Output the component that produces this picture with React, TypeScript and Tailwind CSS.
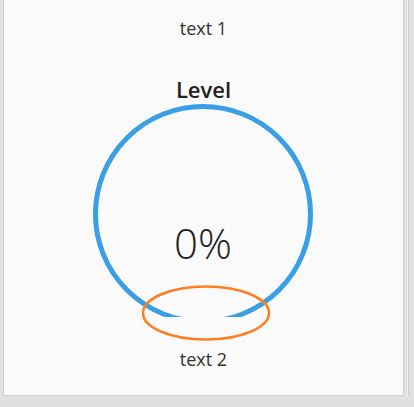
const ring = { cx: 112, cy: 112, r: 107.5 };

const App = () => (
  <div className="w-[414px] h-[407px] bg-[#e0e0e0] flex font-['Open_Sans',sans-serif] overflow-hidden">
    <div className="relative ml-[3px] w-[401px] h-[396px] bg-[#fafafa] border-x border-b border-[#d0d0d0] flex flex-col items-center">
      <div className="mt-[15px] text-[18px] leading-[26px] text-[#333]">text 1</div>
      <div className="mt-[33px] text-[22px] leading-[30px] font-semibold text-[#222]">Level</div>
      <div className="relative mt-[-2px] w-[224px] h-[216px] mr-[1px]">
        <svg width="224" height="216" viewBox="0 0 224 216">
          <defs>
            <clipPath id="ringClip">
              <rect x="0" y="0" width="224" height="215" />
            </clipPath>
          </defs>
          <circle cx={ring.cx} cy={ring.cy} r={ring.r} fill="none" stroke="#3b9fe6" strokeWidth="5" clipPath="url(#ringClip)" />
        </svg>
        <div className="absolute inset-x-0 top-[116px] text-center text-[42px] leading-[50px] font-light text-[#222]">0%</div>
      </div>
      <div className="mt-[28px] text-[18px] leading-[26px] text-[#333]">text 2</div>
      <svg className="absolute left-[138px] top-[284px]" width="134" height="58" viewBox="0 0 134 58">
        <ellipse cx="64" cy="29" rx="63" ry="26.5" fill="none" stroke="#fd7f23" strokeWidth="2.5" />
      </svg>
    </div>
    <div className="ml-[3px] w-[2px] h-[396px] bg-[#f4f4f4] border-r border-[#cfcfcf]" />
  </div>
);

export default App;
